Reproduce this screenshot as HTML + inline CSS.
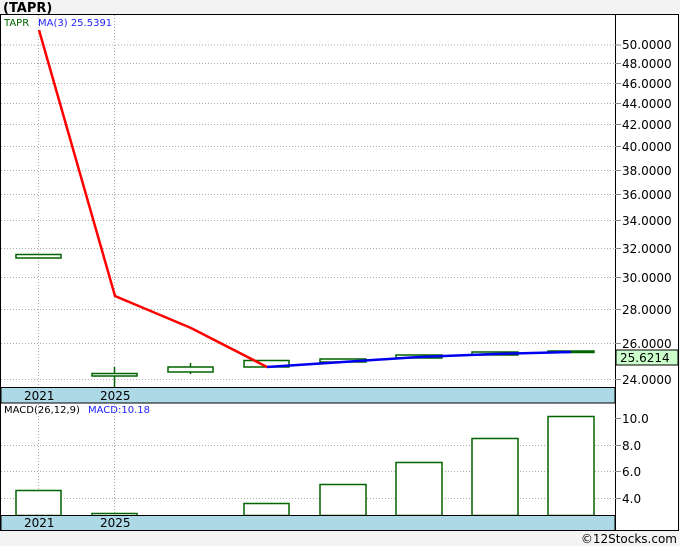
<!DOCTYPE html>
<html><head><style>
body{margin:0;width:680px;height:546px;background:#f3f3f3;overflow:hidden;font-family:Tahoma,"DejaVu Sans","Liberation Sans",sans-serif}
svg{position:absolute;left:0;top:0}
</style></head><body>
<svg width="680" height="546" xmlns="http://www.w3.org/2000/svg" font-family="'DejaVu Sans','Liberation Sans',sans-serif">
<rect x="0" y="0" width="680" height="546" fill="#f3f3f3"/>
<text x="3" y="12" font-size="13" font-weight="bold" fill="#000">(TAPR)</text>
<rect x="0.5" y="14.5" width="678" height="516" fill="#fff" stroke="#000"/>
<g stroke="#aaa" stroke-dasharray="1,2" stroke-width="1">
<line x1="1" x2="615" y1="45" y2="45"/><line x1="1" x2="615" y1="63.5" y2="63.5"/><line x1="1" x2="615" y1="83.5" y2="83.5"/><line x1="1" x2="615" y1="103.5" y2="103.5"/><line x1="1" x2="615" y1="124.5" y2="124.5"/><line x1="1" x2="615" y1="146.5" y2="146.5"/><line x1="1" x2="615" y1="170.5" y2="170.5"/><line x1="1" x2="615" y1="194.5" y2="194.5"/><line x1="1" x2="615" y1="220.5" y2="220.5"/><line x1="1" x2="615" y1="248.5" y2="248.5"/><line x1="1" x2="615" y1="277.5" y2="277.5"/><line x1="1" x2="615" y1="309.5" y2="309.5"/><line x1="1" x2="615" y1="343.5" y2="343.5"/><line x1="1" x2="615" y1="379.5" y2="379.5"/>
<line x1="38.5" x2="38.5" y1="15" y2="387"/><line x1="114.5" x2="114.5" y1="15" y2="387"/>
<line x1="1" x2="615" y1="445.5" y2="445.5"/><line x1="1" x2="615" y1="471.5" y2="471.5"/><line x1="1" x2="615" y1="498.5" y2="498.5"/>
<line x1="38.5" x2="38.5" y1="404" y2="515"/><line x1="114.5" x2="114.5" y1="404" y2="515"/>
</g>
<line x1="615.5" x2="615.5" y1="15" y2="531" stroke="#000"/>
<g stroke="#888">
<line x1="615" x2="621" y1="45" y2="45"/><line x1="615" x2="621" y1="63.5" y2="63.5"/><line x1="615" x2="621" y1="83.5" y2="83.5"/><line x1="615" x2="621" y1="103.5" y2="103.5"/><line x1="615" x2="621" y1="124.5" y2="124.5"/><line x1="615" x2="621" y1="146.5" y2="146.5"/><line x1="615" x2="621" y1="170.5" y2="170.5"/><line x1="615" x2="621" y1="194.5" y2="194.5"/><line x1="615" x2="621" y1="220.5" y2="220.5"/><line x1="615" x2="621" y1="248.5" y2="248.5"/><line x1="615" x2="621" y1="277.5" y2="277.5"/><line x1="615" x2="621" y1="309.5" y2="309.5"/><line x1="615" x2="621" y1="343.5" y2="343.5"/><line x1="615" x2="621" y1="379.5" y2="379.5"/>
<line x1="615" x2="621" y1="418.5" y2="418.5"/><line x1="615" x2="621" y1="445.5" y2="445.5"/><line x1="615" x2="621" y1="471.5" y2="471.5"/><line x1="615" x2="621" y1="498.5" y2="498.5"/>
</g>
<g font-size="12" fill="#000">
<text x="622" y="49">50.0000</text><text x="622" y="68">48.0000</text><text x="622" y="88">46.0000</text><text x="622" y="108">44.0000</text><text x="622" y="129">42.0000</text><text x="622" y="151">40.0000</text><text x="622" y="175">38.0000</text><text x="622" y="199">36.0000</text><text x="622" y="225">34.0000</text><text x="622" y="253">32.0000</text><text x="622" y="282">30.0000</text><text x="622" y="314">28.0000</text><text x="622" y="348">26.0000</text><text x="622" y="384">24.0000</text>
<text x="622" y="423">10.0</text><text x="622" y="450">8.0</text><text x="622" y="476">6.0</text><text x="622" y="503">4.0</text>
</g>
<rect x="616" y="350" width="62" height="15" fill="#ccffcc" stroke="#000"/>
<text x="620" y="362" font-size="12" fill="#000">25.6214</text>
<text x="4" y="26" font-size="10" fill="#006400">TAPR</text>
<text x="38" y="26" font-size="10" fill="#2222ff">MA(3)  25.5391</text>
<g stroke="#006400" stroke-width="1.5" fill="#fff">
<rect x="16" y="254.5" width="45" height="3.5"/>
<line x1="114.5" x2="114.5" y1="367" y2="387"/>
<rect x="92" y="373.5" width="45" height="2.5"/>
<line x1="190.5" x2="190.5" y1="363" y2="374"/>
<rect x="168" y="367" width="45" height="5"/>
<rect x="244" y="360.5" width="45" height="6.5"/>
<rect x="320" y="359" width="46" height="3"/>
<rect x="396" y="355" width="46" height="3"/>
<rect x="472" y="352" width="46" height="3"/>
<rect x="548" y="351" width="46" height="1.5" fill="#006400"/>
</g>
<polyline points="39,30 115,296 191,328 267,367" fill="none" stroke="#ff0000" stroke-width="2.5"/>
<polyline points="267,367 343,362 419,357 495,354 571,352" fill="none" stroke="#0000ee" stroke-width="2.5"/>
<rect x="1" y="387.5" width="614" height="15.5" fill="#add8e6" stroke="#000"/>
<text x="24" y="400" font-size="12" fill="#000">2021</text><text x="100" y="400" font-size="12" fill="#000">2025</text>
<text x="4" y="413" font-size="10" fill="#000">MACD(26,12,9)</text>
<text x="88" y="413" font-size="10" fill="#2222ff">MACD:10.18</text>
<g stroke="#006400" stroke-width="1.5" fill="#fff">
<rect x="16" y="490.5" width="45" height="25"/>
<rect x="92" y="513.5" width="45" height="3"/>
<rect x="244" y="503.5" width="45" height="12"/>
<rect x="320" y="484.5" width="46" height="31"/>
<rect x="396" y="462.5" width="46" height="53"/>
<rect x="472" y="438.5" width="46" height="77"/>
<rect x="548" y="416.5" width="46" height="99"/>
</g>
<rect x="1" y="515.5" width="614" height="15" fill="#add8e6" stroke="#000"/>
<text x="24" y="527" font-size="12" fill="#000">2021</text><text x="100" y="527" font-size="12" fill="#000">2025</text>
<text x="677" y="543" font-size="12" fill="#000" text-anchor="end">©12Stocks.com</text>
</svg>
</body></html>
